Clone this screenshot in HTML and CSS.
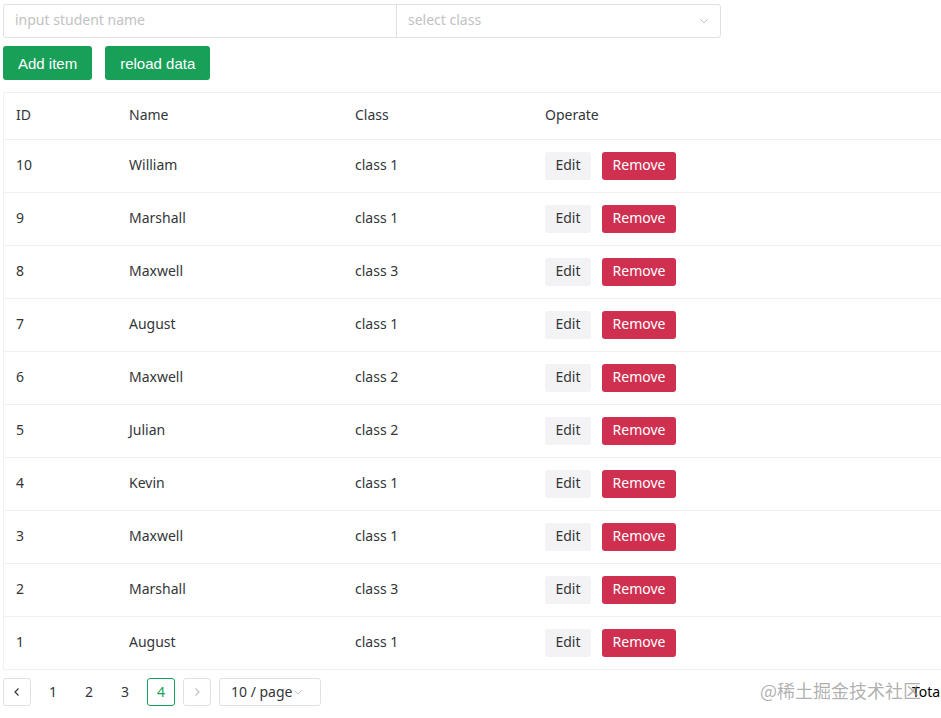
FILE: index.html
```html
<!DOCTYPE html>
<html lang="en">
<head>
<meta charset="utf-8">
<title>Students</title>
<link rel="stylesheet" href="styles.css">
</head>
<body>
<div class="page">
  <div class="filters">
    <div class="input-wrap"><span class="placeholder">input student name</span></div>
    <div class="select-wrap">
      <span class="placeholder">select class</span>
      <svg class="arrow" width="12" height="12" viewBox="0 0 12 12"><path d="M2.5 4.5 L6 8 L9.5 4.5" fill="none" stroke="#c2c2c2" stroke-width="1"/></svg>
    </div>
  </div>
  <div class="actions">
    <button class="btn btn-primary">Add item</button>
    <button class="btn btn-primary">reload data</button>
  </div>
  <div class="table">
    <div class="row head">
      <div class="c-id">ID</div><div class="c-name">Name</div><div class="c-class">Class</div><div class="c-op">Operate</div>
    </div>
    <div class="row"><div class="c-id">10</div><div class="c-name">William</div><div class="c-class">class 1</div><div class="c-op"><button class="btn-edit">Edit</button><button class="btn-remove">Remove</button></div></div>
    <div class="row"><div class="c-id">9</div><div class="c-name">Marshall</div><div class="c-class">class 1</div><div class="c-op"><button class="btn-edit">Edit</button><button class="btn-remove">Remove</button></div></div>
    <div class="row"><div class="c-id">8</div><div class="c-name">Maxwell</div><div class="c-class">class 3</div><div class="c-op"><button class="btn-edit">Edit</button><button class="btn-remove">Remove</button></div></div>
    <div class="row"><div class="c-id">7</div><div class="c-name">August</div><div class="c-class">class 1</div><div class="c-op"><button class="btn-edit">Edit</button><button class="btn-remove">Remove</button></div></div>
    <div class="row"><div class="c-id">6</div><div class="c-name">Maxwell</div><div class="c-class">class 2</div><div class="c-op"><button class="btn-edit">Edit</button><button class="btn-remove">Remove</button></div></div>
    <div class="row"><div class="c-id">5</div><div class="c-name">Julian</div><div class="c-class">class 2</div><div class="c-op"><button class="btn-edit">Edit</button><button class="btn-remove">Remove</button></div></div>
    <div class="row"><div class="c-id">4</div><div class="c-name">Kevin</div><div class="c-class">class 1</div><div class="c-op"><button class="btn-edit">Edit</button><button class="btn-remove">Remove</button></div></div>
    <div class="row"><div class="c-id">3</div><div class="c-name">Maxwell</div><div class="c-class">class 1</div><div class="c-op"><button class="btn-edit">Edit</button><button class="btn-remove">Remove</button></div></div>
    <div class="row"><div class="c-id">2</div><div class="c-name">Marshall</div><div class="c-class">class 3</div><div class="c-op"><button class="btn-edit">Edit</button><button class="btn-remove">Remove</button></div></div>
    <div class="row last"><div class="c-id">1</div><div class="c-name">August</div><div class="c-class">class 1</div><div class="c-op"><button class="btn-edit">Edit</button><button class="btn-remove">Remove</button></div></div>
  </div>
  <div class="pagination">
    <div class="pg-btn"><svg width="12" height="12" viewBox="0 0 12 12"><path d="M7.5 2.5 L4 6 L7.5 9.5" fill="none" stroke="#333639" stroke-width="1.2"/></svg></div>
    <div class="pg-num">1</div>
    <div class="pg-num">2</div>
    <div class="pg-num">3</div>
    <div class="pg-num active">4</div>
    <div class="pg-btn disabled"><svg width="12" height="12" viewBox="0 0 12 12"><path d="M4.5 2.5 L8 6 L4.5 9.5" fill="none" stroke="#c2c2c2" stroke-width="1.2"/></svg></div>
    <div class="pg-size">10 / page<svg width="12" height="12" viewBox="0 0 12 12"><path d="M2.5 4.5 L6 8 L9.5 4.5" fill="none" stroke="#c2c2c2" stroke-width="1"/></svg></div>
    <div class="total">Total</div>
  </div>
  <div class="watermark">@稀土掘金技术社区</div>
</div>
</body>
</html>
```

FILE: styles.css
```css
html, body {
  margin: 0;
  padding: 0;
  overflow: hidden;
  background: #fff;
}
body {
  font-family: "Noto Sans", "Liberation Sans", "Noto Sans CJK SC", sans-serif;
  font-size: 14px;
  color: #333639;
}
.page {
  position: relative;
  padding: 4px 0 0 3px;
  width: 1100px;
}
.filters {
  display: flex;
  width: 718px;
  height: 34px;
  border: 1px solid #e0e0e6;
  border-radius: 3px;
  box-sizing: border-box;
}
.input-wrap {
  width: 393px;
  border-right: 1px solid #e0e0e6;
  display: flex;
  align-items: center;
  padding-left: 11px;
  box-sizing: border-box;
}
.select-wrap {
  flex: 1;
  display: flex;
  align-items: center;
  justify-content: space-between;
  padding: 0 10px 0 11px;
}
.placeholder {
  color: #c2c2c2;
  line-height: 18px;
  padding-bottom: 2px;
}
.arrow { display: block; }
.actions {
  display: flex;
  gap: 13px;
  margin-top: 8px;
}
.btn {
  font-family: "Liberation Sans", Arial, sans-serif;
  font-size: 15px;
  height: 34px;
  border: none;
  border-radius: 3px;
  padding: 0 15px;
  cursor: pointer;
}
.btn-primary {
  background: #18a058;
  color: #fff;
}
.table {
  margin-top: 12px;
  width: 1000px;
  border-top: 1px solid #efeff5;
  border-left: 1px solid #efeff5;
  border-bottom: 1px solid #efeff5;
}
.row {
  display: flex;
  align-items: center;
  height: 53px;
  border-bottom: 1px solid #efeff5;
  box-sizing: border-box;
}
.row.last { border-bottom: none; height: 52px; }
.row.head { height: 47px; }
.row > div {
  padding-left: 12px;
  box-sizing: border-box;
  line-height: 18px;
}
.row > .c-id, .row > .c-name, .row > .c-class, .head > .c-op {
  padding-bottom: 3px;
}
.c-id { width: 113px; }
.c-name { width: 226px; }
.c-class { width: 190px; }
.c-op {
  flex: 1;
  display: flex;
  gap: 11px;
}
.btn-edit, .btn-remove {
  font: inherit;
  font-size: 14px;
  height: 28px;
  border: none;
  border-radius: 3px;
  padding: 0 0 2px;
}
.btn-edit {
  background: #f3f3f5;
  color: #333639;
  width: 46px;
}
.btn-remove {
  background: #d03050;
  color: #fff;
  width: 74px;
}
.pagination {
  display: flex;
  align-items: center;
  margin-top: 8px;
  height: 28px;
}
.pg-btn, .pg-num {
  width: 28px;
  height: 28px;
  box-sizing: border-box;
  display: flex;
  align-items: center;
  justify-content: center;
  border-radius: 3px;
  margin-right: 8px;
  padding-bottom: 2px;
}
.pg-btn { border: 1px solid #e0e0e6; padding-bottom: 0; }
.pg-num.active {
  border: 1px solid #18a058;
  color: #18a058;
}
.pg-size {
  height: 28px;
  width: 102px;
  box-sizing: border-box;
  border: 1px solid #e0e0e6;
  border-radius: 3px;
  display: flex;
  align-items: center;
  padding: 0 0 2px 11px;
}
.pg-size svg { margin-top: 2px; }
.total {
  margin-left: 591px;
  color: #000;
  padding-bottom: 2px;
}
.watermark {
  position: absolute;
  left: 760px;
  top: 678px;
  font-size: 18px;
  line-height: 24px;
  color: rgba(150,150,150,0.75);
  font-family: "Noto Sans CJK SC", sans-serif;
}
```
